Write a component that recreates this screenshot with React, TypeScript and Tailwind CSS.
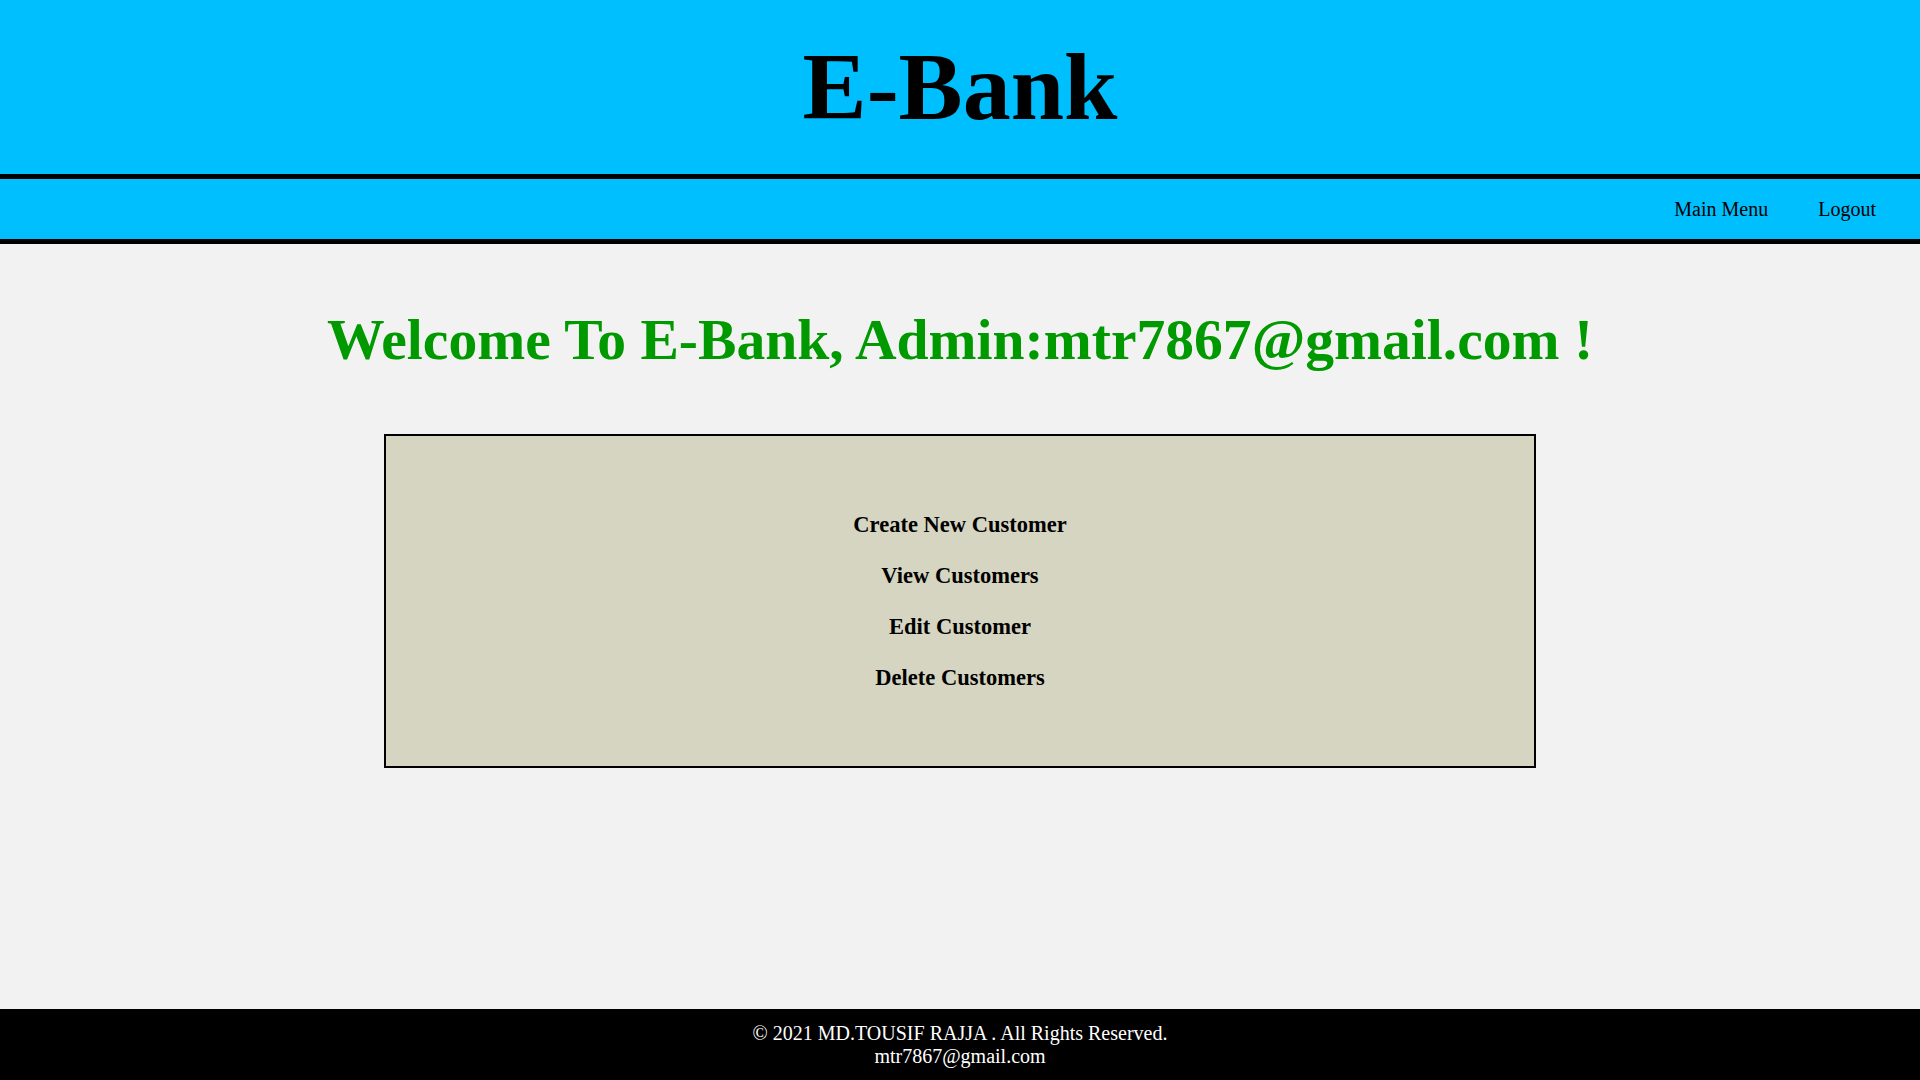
import React from "react";

const serif = "font-['Liberation_Serif','Times_New_Roman',serif]";

const links = ["Create New Customer", "View Customers", "Edit Customer", "Delete Customers"];

export default function App() {
  return (
    <div className={`min-h-screen flex flex-col bg-[#f2f2f2] text-black ${serif}`}>
      <header className="h-[174px] bg-[#00bfff] flex items-center justify-center">
        <h1 className="text-[96px] font-bold leading-[110px]">E-Bank</h1>
      </header>
      <nav className="h-[70px] bg-[#00bfff] border-y-[5px] border-black flex items-center justify-end gap-[50px] pr-[44px]">
        <a href="#" className="text-[20px] leading-[23px]">
          Main Menu
        </a>
        <a href="#" className="text-[20px] leading-[23px]">
          Logout
        </a>
      </nav>

      <main className="flex flex-col items-center pt-[63px]">
        <h2 className="text-[57.6px] font-bold leading-[65px] text-[#009900]">
          Welcome To E-Bank, Admin:mtr7867@gmail.com !
        </h2>
        <div className="mt-[62px] w-[1152px] border-2 border-black bg-[#d6d5c1] py-[76px] flex flex-col items-center gap-[26px]">
          {links.map((l) => (
            <a key={l} href="#" className="text-[22.5px] font-bold leading-[25px]">
              {l}
            </a>
          ))}
        </div>
      </main>

      <footer className="mt-auto h-[71px] bg-black text-white flex flex-col items-center justify-center text-[20px] leading-[23px]">
        <p>© 2021 MD.TOUSIF RAJJA . All Rights Reserved.</p>
        <p>mtr7867@gmail.com</p>
      </footer>
    </div>
  );
}
